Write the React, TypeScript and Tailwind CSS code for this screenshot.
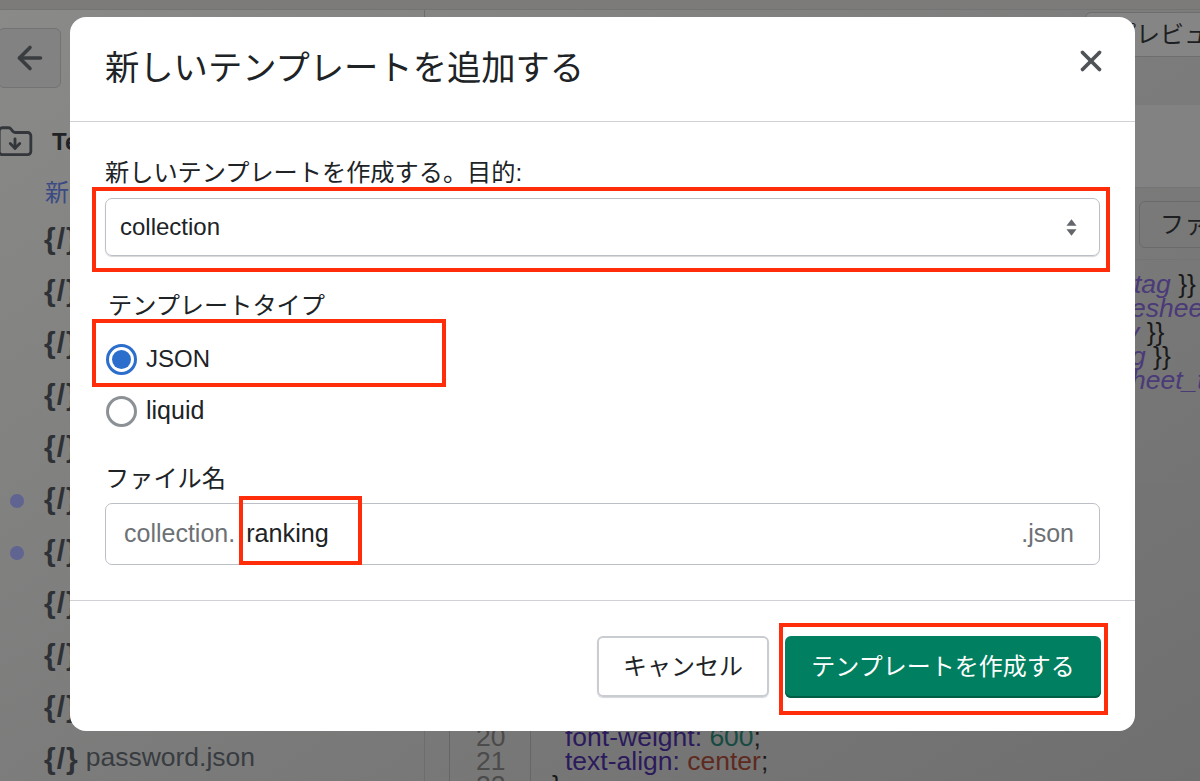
import { X, ArrowLeft, FolderDown } from 'lucide-react'

const sans = 'font-["Liberation_Sans","Noto_Sans_CJK_JP",sans-serif]'

const files = [
  { dot: false }, { dot: false }, { dot: false }, { dot: false }, { dot: false },
  { dot: true }, { dot: true }, { dot: false }, { dot: false }, { dot: false },
]

function FileRow({ dot, name }: { dot?: boolean; name?: string }) {
  return (
    <div className="relative flex h-[52px] items-center pl-[44px] text-[#2e3135]">
      {dot && <span className="absolute left-[10px] top-[22px] h-[14px] w-[14px] rounded-full bg-[#5f6490]" />}
      <span className="text-[30px] font-bold tracking-[1px]">{'{/}'}</span>
      {name && <span className="ml-[7px] text-[26.5px] text-[#383c41]">{name}</span>}
    </div>
  )
}

function Background() {
  return (
    <div className="flex h-full flex-col bg-gradient-to-br from-[#8a8a89] to-[#6f6f6f]">
      {/* top bar */}
      <div className="h-[10px] shrink-0 border-b border-[#747474] bg-[#7c7b7a]" />
      <div className="flex flex-1">
        {/* file list */}
        <div className="w-[424px] shrink-0">
          <div className="-ml-[2px] mt-[18px] flex h-[60px] w-[63px] items-center justify-center rounded-[6px] border border-[#737373] bg-[#828282]">
            <ArrowLeft className="h-[36px] w-[36px] text-[#3a3d40]" strokeWidth={2.4} />
          </div>
          <div className="mt-[34px] flex h-[40px] items-center">
            <FolderDown className="-ml-[4px] h-[38px] w-[38px] text-[#33363a]" strokeWidth={1.8} />
            <span className="ml-[18px] text-[24px] font-bold text-[#202225]">Templates</span>
          </div>
          <div className="mt-[16px] pl-[45px] text-[24px] leading-[30px] text-[#3b4a84]">新しい</div>
          <div className="mt-[4px]">
            {files.map((f, i) => (
              <FileRow key={i} dot={f.dot} />
            ))}
            <FileRow name="password.json" />
          </div>
        </div>
        {/* code panel */}
        <div className="min-w-0 flex-1 border-l border-[#6d6d6d]">
          <div className="flex justify-end">
            <div className="-mr-[20px] mt-[2px] flex h-[45px] w-[135px] items-center overflow-hidden rounded-[6px] border border-[#6e6e6e] bg-[#858585] pl-[26px] text-[24px] whitespace-nowrap text-[#1d1f22]">
              プレビュー
            </div>
          </div>
          <div className="mt-[48px] h-[82px] bg-[#828282]" />
          <div className="flex h-[73px] justify-end border-y border-[#747474] pt-[13px]">
            <div className="-mr-[20px] flex h-[47px] w-[81px] items-center overflow-hidden rounded-[6px] border border-[#6a6a6a] pl-[20px] text-[24px] whitespace-nowrap text-[#1d1f22]">
              ファ
            </div>
          </div>
          <div className="mt-[12px] pl-[706px] text-[26.5px] italic leading-[24px] whitespace-nowrap text-[#4a3a78]">
            <div className="ml-[3px]">tag <span className="not-italic text-[#1a1a1a]">{'}}'}</span></div>
            <div>esheet</div>
            <div className="-ml-[5px]">y <span className="not-italic text-[#1a1a1a]">{'}}'}</span></div>
            <div>g <span className="not-italic text-[#1a1a1a]">{'}}'}</span></div>
            <div>heet_t</div>
          </div>
          <div className="mt-[93px] h-[24px] bg-[#747474]" />
          <div className="ml-[24px] mt-[216px] flex text-[26.5px] leading-[24px]">
            <div className="w-[82px] shrink-0 border-x border-[#666] pl-[26px] text-[#4b4b4b]">
              <div>20</div>
              <div>21</div>
              <div>22</div>
            </div>
            <div className="pl-[34px] whitespace-nowrap">
              <div>
                <span className="text-[#2b1a5c]">font-weight:</span> <span className="text-[#174a42]">600</span>
                <span className="text-[#1a1a1a]">;</span>
              </div>
              <div>
                <span className="text-[#2b1a5c]">text-align:</span> <span className="text-[#5e2a20]">center</span>
                <span className="text-[#1a1a1a]">;</span>
              </div>
              <div className="-ml-[13px] text-[#1a1a1a]">{'}'}</div>
            </div>
          </div>
        </div>
      </div>
    </div>
  )
}

function Mark({ className }: { className: string }) {
  return <div className={`absolute border-[4px] border-[#ff2d0a] ${className}`} />
}

export default function App() {
  return (
    <div className={`relative h-[781px] w-[1200px] overflow-hidden ${sans}`}>
      <Background />

      {/* dialog */}
      <div className="absolute left-[70px] top-[17px] flex h-[714px] w-[1065px] flex-col rounded-[16px] bg-white text-[#202326]">
        <div className="flex h-[105px] shrink-0 items-start justify-between border-b border-[#d0d1d6] pl-[35px] pr-[27px]">
          <h2 className="mt-[28px] text-[34.3px] leading-[46px] font-normal">新しいテンプレートを追加する</h2>
          <X className="mt-[27px] h-[34px] w-[34px] text-[#4f5256]" strokeWidth={2.6} />
        </div>

        <div className="flex-1 pl-[35px] pr-[35px]">
          <div className="mt-[35px] text-[24.2px] leading-[32px]">新しいテンプレートを作成する。目的:</div>
          <div className="mt-[9px] flex h-[58px] items-center justify-between rounded-[7px] border border-[#bcc0c6] pl-[14px] pr-[22px] shadow-[0_1px_1px_#d5d7da]">
            <span className="text-[24px]">collection</span>
            <svg width="11" height="17" viewBox="0 0 12 18" className="fill-[#63666b]">
              <path d="M6 0l5.5 7H.5zM6 18L.5 11h11z" />
            </svg>
          </div>

          <div className="mt-[34px] pl-[3px] text-[24.2px] leading-[32px]">テンプレートタイプ</div>
          <div className="ml-[1px] mt-[11px] flex h-[52px] items-center gap-[9px]">
            <span className="flex h-[31px] w-[31px] items-center justify-center rounded-full border-[3px] border-[#2c6ecb]">
              <span className="h-[19px] w-[19px] rounded-full bg-[#2c6ecb]" />
            </span>
            <span className="text-[24px]">JSON</span>
          </div>
          <div className="ml-[1px] flex h-[52px] items-center gap-[9px]">
            <span className="h-[31px] w-[31px] rounded-full border-[3px] border-[#8c9196]" />
            <span className="text-[25px]">liquid</span>
          </div>

          <div className="mt-[26px] text-[24.2px] leading-[32px]">ファイル名</div>
          <div className="mt-[8px] flex h-[62px] items-center rounded-[7px] border border-[#bcc0c6] pl-[18px] pr-[25px] text-[25px]">
            <span className="text-[#6d7175]">collection.</span>
            <span className="ml-[11px] text-[25.2px]">ranking</span>
            <span className="ml-auto text-[#6d7175]">.json</span>
          </div>
        </div>

        <div className="flex h-[131px] shrink-0 items-start justify-end gap-[16px] border-t border-[#d0d1d6] pr-[34px] pt-[35px]">
          <button className="flex h-[61px] w-[172px] items-center justify-center rounded-[6px] border-2 border-[#c9ccd0] text-[24px] shadow-[0_1px_1px_#d5d7da]">
            キャンセル
          </button>
          <button className="flex h-[62px] w-[316px] items-center justify-center rounded-[6px] bg-[#008060] text-[24px] text-white shadow-[inset_0_-2px_0_#005e46]">
            テンプレートを作成する
          </button>
        </div>
      </div>

      {/* red annotation boxes */}
      <Mark className="left-[92px] top-[187px] h-[85px] w-[1018px]" />
      <Mark className="left-[92px] top-[319px] h-[68px] w-[354px]" />
      <Mark className="left-[239px] top-[496px] h-[69px] w-[123px]" />
      <Mark className="left-[779px] top-[623px] h-[92px] w-[329px]" />
    </div>
  )
}
